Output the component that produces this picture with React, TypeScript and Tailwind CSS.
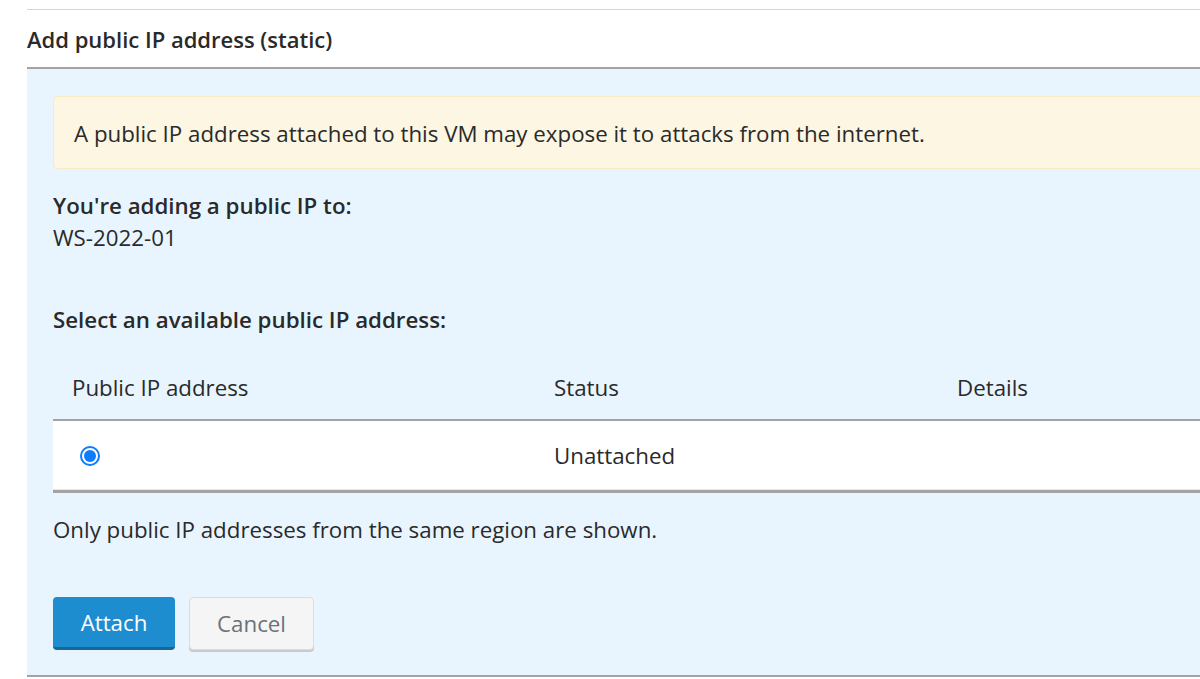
import { useState } from 'react';

const font = { fontFamily: '"Open Sans", "Noto Sans", Arial, sans-serif' };

const App = () => {
   const [selected, setSelected] = useState(true);

   return (
      <div className="w-[1200px] h-[679px] bg-white overflow-hidden text-[#222]" style={font}>
         <div className="ml-[27px] pt-[9px]">
            <div className="border-t border-[#d4d4d4]" />

            {/* Heading */}
            <div className="h-[59px] flex items-center pt-[1px] border-b-2 border-[#a3a3a3]">
               <h2 className="text-[22px] font-semibold text-[#2a2a2a] leading-none">Add public IP address (static)</h2>
            </div>

            {/* Panel */}
            <div className="bg-[#e9f5fe] border-b-2 border-[#a3a3a3] h-[608px] pl-[26px] pt-[27px]">
               <div className="h-[73px] flex items-center pl-[20px] pt-[3px] bg-[#fcf6e2] border border-[#f7ecc6] rounded-l-[4px] -mr-[4px]">
                  <p className="text-[22.3px] text-[#2a2a2a]">
                     A public IP address attached to this VM may expose it to attacks from the internet.
                  </p>
               </div>

               <div className="mt-[21px]">
                  <p className="text-[22.3px] font-semibold text-[#2a2a2a] leading-[32px]">You're adding a public IP to:</p>
                  <p className="text-[22.3px] text-[#2a2a2a] leading-[32px]">WS-2022-01</p>
               </div>

               <p className="mt-[50px] text-[22.3px] font-semibold text-[#2a2a2a] leading-[32px]">Select an available public IP address:</p>

               {/* Table */}
               <div className="mt-[21px]">
                  <div className="h-[64px] grid grid-cols-[501px_403px_1fr] items-center border-b-2 border-[#a3a3a3] text-[22.3px] text-[#2a2a2a]">
                     <span className="pl-[19px]">Public IP address</span>
                     <span>Status</span>
                     <span>Details</span>
                  </div>
                  <div className="h-[72px] grid grid-cols-[501px_403px_1fr] items-center bg-white border-b-[3px] border-[#a3a3a3] shadow-[inset_0_-1px_0_#e6e6e6] text-[22.3px] text-[#2a2a2a]">
                     <span className="pl-[27px] pt-[1px] flex items-center">
                        <button
                           type="button"
                           onClick={() => setSelected(!selected)}
                           className="w-[20px] h-[20px] rounded-full border-2 border-[#0b7cff] flex items-center justify-center bg-white"
                        >
                           {selected && <span className="w-[12px] h-[12px] rounded-full bg-[#0b7cff]" />}
                        </button>
                     </span>
                     <span className="pt-[1px]">Unattached</span>
                     <span />
                  </div>
               </div>

               <p className="mt-[21px] text-[22.3px] text-[#2a2a2a] leading-[32px]">Only public IP addresses from the same region are shown.</p>

               {/* Actions */}
               <div className="mt-[51px] flex gap-[14px]">
                  <button className="w-[122px] h-[53px] pt-[2px] rounded-[4px] bg-[#1e8dd0] border-b-[3px] border-[#16689b] text-white text-[22.3px]">
                     Attach
                  </button>
                  <button className="w-[125px] h-[53px] rounded-[4px] bg-[#f5f5f5] border border-[#dcdcdc] shadow-[0_2px_0_#c9c9c9] text-[#6b7178] text-[22.3px]">
                     Cancel
                  </button>
               </div>
            </div>
         </div>
      </div>
   );
};

export default App;
